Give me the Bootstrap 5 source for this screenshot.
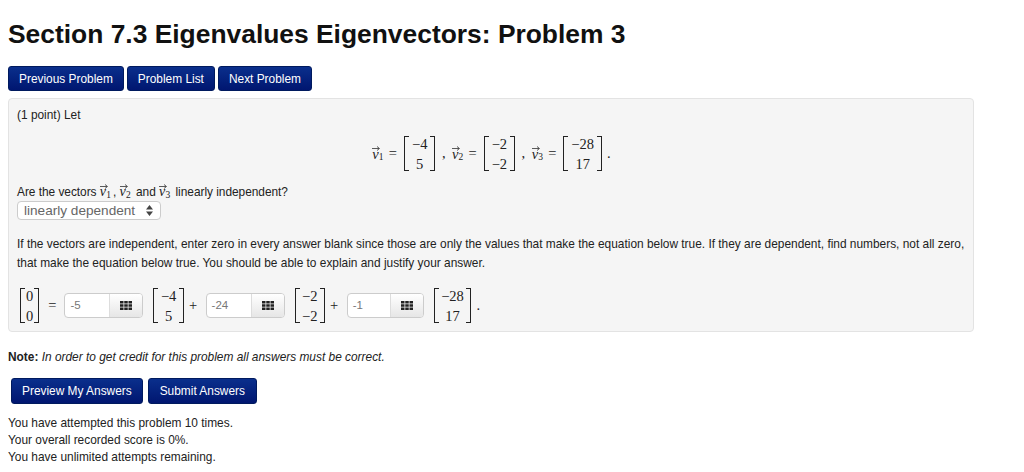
<!DOCTYPE html>
<html lang="en">
<head>
<meta charset="utf-8">
<title>Section 7.3 Eigenvalues Eigenvectors: Problem 3</title>
<link href="https://cdn.jsdelivr.net/npm/bootstrap@5.3.0/dist/css/bootstrap.min.css" rel="stylesheet">
<style>
html,body{height:472px;overflow:hidden}
body{font-family:"Liberation Sans",Arial,sans-serif;font-size:11.9px;line-height:17px;color:#222;background:#fff;padding:0 8px}
.page-title{font-size:26.4px;line-height:30px;font-weight:700;color:#111;margin:0;padding-top:19px}
.ww-btn{font-size:11.9px;line-height:15px;color:#fff;border:1px solid #001a5e;border-radius:3px;padding:5px 10px 3px;background:linear-gradient(#0a2f8c,#001670)}
.ww-btn:hover{color:#fff;background:#001670}
.nav-row{gap:3px;margin-top:17px}
.ww-well{width:966px;height:234px;margin-top:7px;background:#f5f5f5;border:1px solid #e3e3e3;border-radius:4px;padding:8px;display:flex;flex-direction:column}
.ww-well p{margin:0}
.m{font-family:"Liberation Serif","Times New Roman",serif;font-size:14.5px;color:#222}
.mat{display:inline-flex;flex-direction:column;align-items:center;justify-content:center;height:35px;padding:0 6.5px;line-height:20px;border-left:1px solid #222;border-right:1px solid #222;position:relative;text-align:center}
.mat::before,.mat::after{content:"";position:absolute;left:0;right:0;height:1px;background:linear-gradient(to right,#222 4px,transparent 4px,transparent calc(100% - 4px),#222 calc(100% - 4px))}
.mat::before{top:0}
.mat::after{bottom:0}
.vec{position:relative;display:inline-block;font-style:italic;padding-right:7px;line-height:14px}
.vec sub{position:absolute;font-style:normal;font-size:9.5px;left:6.5px;bottom:-1px;top:auto;line-height:9px}
.vec svg{position:absolute;left:0;top:-1px;width:8px;height:5px}
.display-line{display:flex;align-items:center;justify-content:center;margin-top:12px;height:35px;padding-left:1px}
.display-line .mat{padding:0 7px}
.eq-sign{margin:0 7px 0 3px}
.comma{margin:0 6.5px}
.period{margin-left:5px}
.q-line{margin-top:13px !important;line-height:17px;letter-spacing:-.03px}
.q-line .vec{font-size:14px}
.ww-select{width:144px;height:19px;border:1px solid #ccc;border-radius:4px;background:#fff;color:#666;font-size:13.6px;line-height:17px;padding:0 7px 0 6px;display:flex;align-items:center;justify-content:space-between}
.chev{width:7px;height:11px;flex:none}
.explain{margin-top:15px !important;line-height:19px;width:950px}
.eq-line{display:flex;align-items:center;margin-top:15px;height:35px;padding-left:3px}
.eq-line .mat-zero{padding:0 5px}
.eq-a{margin:0 8px 0 9px}
.eq-p{margin:0 8.5px 0 5px}
.mat-a{margin-left:10px}
.ans{display:inline-flex;width:79px;height:25px;border:1px solid #ccc;border-radius:4px;background:#fff;overflow:hidden;font-size:11.5px;color:#777;font-family:"Liberation Sans",Arial,sans-serif}
.ans-short{width:77px}
.ans-val{flex:1;padding:0 5px;line-height:23px}
.ans-btn{width:33px;background:linear-gradient(#fff,#e6e6e6);border-left:1px solid #ddd;display:flex;align-items:center;justify-content:center}
.ans-btn svg{width:12px;height:9px}
.note{margin:17px 0 0;line-height:17px}
.act-row{gap:5px;margin:12px 0 0 3px}
.ww-btn-act{padding:5px 10px;font-size:11.9px;height:26px}
.ww-btn-act + .ww-btn-act{padding:5px 11px}
.status{margin-top:11px;line-height:17px;font-size:11.9px}
</style>
</head>
<body>
<h1 class="page-title">Section 7.3 Eigenvalues Eigenvectors: Problem 3</h1>
<div class="d-flex nav-row">
<a href="#" class="btn ww-btn">Previous Problem</a>
<a href="#" class="btn ww-btn">Problem List</a>
<a href="#" class="btn ww-btn">Next Problem</a>
</div>
<div class="ww-well">
<p>(1 point) Let</p>
<div class="display-line m">
<span class="vec">v<svg viewBox="0 0 8 5"><path d="M0 2.500H7M5 .5L7.500 2.500 5 4.500" fill="none" stroke="#333" stroke-width=".8"/></svg><sub>1</sub></span><span class="eq-sign">=</span>
<span class="mat"><span>−4</span><span>5</span></span><span class="comma">,</span>
<span class="vec">v<svg viewBox="0 0 8 5"><path d="M0 2.500H7M5 .5L7.500 2.500 5 4.500" fill="none" stroke="#333" stroke-width=".8"/></svg><sub>2</sub></span><span class="eq-sign">=</span>
<span class="mat"><span>−2</span><span>−2</span></span><span class="comma">,</span>
<span class="vec">v<svg viewBox="0 0 8 5"><path d="M0 2.500H7M5 .5L7.500 2.500 5 4.500" fill="none" stroke="#333" stroke-width=".8"/></svg><sub>3</sub></span><span class="eq-sign">=</span>
<span class="mat"><span>−28</span><span>17</span></span><span class="period">.</span>
</div>
<p class="q-line">Are the vectors <span class="vec m">v<svg viewBox="0 0 8 5"><path d="M0 2.500H7M5 .5L7.500 2.500 5 4.500" fill="none" stroke="#333" stroke-width=".8"/></svg><sub>1</sub></span>, <span class="vec m">v<svg viewBox="0 0 8 5"><path d="M0 2.500H7M5 .5L7.500 2.500 5 4.500" fill="none" stroke="#333" stroke-width=".8"/></svg><sub>2</sub></span> and <span class="vec m">v<svg viewBox="0 0 8 5"><path d="M0 2.500H7M5 .5L7.500 2.500 5 4.500" fill="none" stroke="#333" stroke-width=".8"/></svg><sub>3</sub></span> linearly independent?</p>
<div class="ww-select"><span>linearly dependent</span><svg class="chev" viewBox="0 0 7 11"><path d="M3.500 0L7 4.500H0zM3.500 11L0 6.500H7z" fill="#444"/></svg></div>
<p class="explain">If the vectors are independent, enter zero in every answer blank since those are only the values that make the equation below true. If they are dependent, find numbers, not all zero, that make the equation below true. You should be able to explain and justify your answer.</p>
<div class="eq-line m">
<span class="mat mat-zero"><span>0</span><span>0</span></span><span class="eq-a">=</span>
<span class="ans"><span class="ans-val">-5</span><span class="ans-btn"><svg viewBox="0 0 12 9"><path d="M0 0h3.500v2.500H0zM4.250 0h3.500v2.500h-3.500zM8.500 0H12v2.500H8.500zM0 3.250h3.500v2.500H0zM4.250 3.250h3.500v2.500h-3.500zM8.500 3.250H12v2.500H8.500zM0 6.500h3.500V9H0zM4.250 6.500h3.500V9h-3.500zM8.500 6.500H12V9H8.500z" fill="#222"/></svg></span></span>
<span class="mat mat-a"><span>−4</span><span>5</span></span><span class="eq-p">+</span>
<span class="ans"><span class="ans-val">-24</span><span class="ans-btn"><svg viewBox="0 0 12 9"><path d="M0 0h3.500v2.500H0zM4.250 0h3.500v2.500h-3.500zM8.500 0H12v2.500H8.500zM0 3.250h3.500v2.500H0zM4.250 3.250h3.500v2.500h-3.500zM8.500 3.250H12v2.500H8.500zM0 6.500h3.500V9H0zM4.250 6.500h3.500V9h-3.500zM8.500 6.500H12V9H8.500z" fill="#222"/></svg></span></span>
<span class="mat mat-a"><span>−2</span><span>−2</span></span><span class="eq-p">+</span>
<span class="ans ans-short"><span class="ans-val">-1</span><span class="ans-btn"><svg viewBox="0 0 12 9"><path d="M0 0h3.500v2.500H0zM4.250 0h3.500v2.500h-3.500zM8.500 0H12v2.500H8.500zM0 3.250h3.500v2.500H0zM4.250 3.250h3.500v2.500h-3.500zM8.500 3.250H12v2.500H8.500zM0 6.500h3.500V9H0zM4.250 6.500h3.500V9h-3.500zM8.500 6.500H12V9H8.500z" fill="#222"/></svg></span></span>
<span class="mat mat-a"><span>−28</span><span>17</span></span><span class="period">.</span>
</div>
</div>
<p class="note"><strong>Note:</strong> <em>In order to get credit for this problem all answers must be correct.</em></p>
<div class="d-flex act-row">
<button type="button" class="btn ww-btn ww-btn-act">Preview My Answers</button>
<button type="button" class="btn ww-btn ww-btn-act">Submit Answers</button>
</div>
<div class="status">You have attempted this problem 10 times.<br>Your overall recorded score is 0%.<br>You have unlimited attempts remaining.</div>
</body>
</html>
